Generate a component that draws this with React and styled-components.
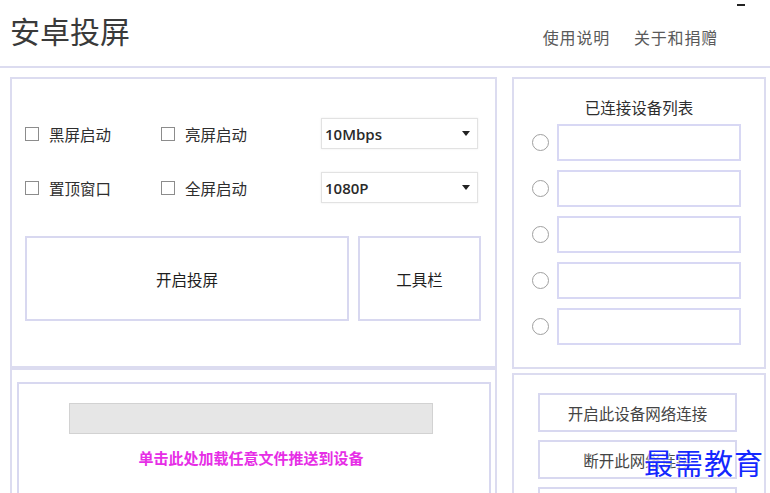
import React from 'react'
import styled, { createGlobalStyle } from 'styled-components'

const GlobalStyle = createGlobalStyle`
  html, body {
    margin: 0;
    padding: 0;
    background: #fff;
    overflow: hidden;
  }
  body {
    font-family: "Noto Sans CJK SC", "Noto Sans", sans-serif;
    color: #333;
  }
`

const Window = styled.div`
  position: relative;
  width: 770px;
  height: 493px;
  overflow: hidden;
  background: #fff;
`

const Header = styled.div`
  display: flex;
  justify-content: space-between;
  align-items: flex-start;
  height: 66px;
  padding: 0 52px 0 10px;
  border-bottom: 2px solid #dcdcf0;
`

const Title = styled.h1`
  margin: 10px 0 0;
  font-size: 30px;
  line-height: 40px;
  font-weight: 400;
  color: #3a3a3a;
`

const Links = styled.div`
  display: flex;
  gap: 24px;
  margin-top: 26px;
`

const Link = styled.span`
  font-size: 16px;
  line-height: 22px;
  color: #5a5a5a;
  letter-spacing: 0.8px;
`

const WinControl = styled.span`
  position: absolute;
  top: 4px;
  right: 25px;
  width: 8px;
  height: 2px;
  background: #222;
`

const Main = styled.div`
  display: flex;
  gap: 15px;
  padding: 9px 0 0 10px;
`

const Column = styled.div`
  display: flex;
  flex-direction: column;
  width: ${p => p.$w}px;
  gap: ${p => p.$gap || 0}px;
`

const Panel = styled.div`
  box-sizing: border-box;
  height: ${p => p.$h ? `${p.$h}px` : 'auto'};
  border: 2px solid #dcdcf0;
  padding: ${p => p.$pad || '0'};
`

const OptionGrid = styled.div`
  display: grid;
  grid-template-columns: 136px 160px 157px;
  grid-auto-rows: 31px;
  row-gap: 23px;
  align-items: center;
`

const Check = styled.label`
  display: flex;
  align-items: center;
  gap: 10px;
  font-size: 15.5px;
  color: #2e2e2e;
`

const Box = styled.span`
  box-sizing: border-box;
  width: 14px;
  height: 14px;
  border: 1.5px solid #8c8c8c;
  background: #fff;
`

const Select = styled.div`
  box-sizing: border-box;
  height: 31px;
  display: flex;
  align-items: center;
  justify-content: space-between;
  padding: 0 7px 0 3px;
  border: 1.5px solid #e2e2e2;
  box-shadow: 0 0 2px rgba(0, 0, 0, 0.08);
  font-family: "Open Sans", "Lato", sans-serif;
  font-weight: 600;
  font-size: 15px;
  color: #2a2a2a;
`

const Caret = styled.span`
  width: 0;
  height: 0;
  border-left: 4.5px solid transparent;
  border-right: 4.5px solid transparent;
  border-top: 5px solid #222;
`

const ButtonRow = styled.div`
  display: flex;
  gap: 9px;
  margin-top: 33px;
`

const BigButton = styled.div`
  box-sizing: border-box;
  width: ${p => p.$w}px;
  height: 85px;
  display: flex;
  align-items: center;
  justify-content: center;
  border: 2px solid #d8d8f0;
  font-size: 15.5px;
  color: #1e1e1e;
`

const InnerPanel = styled.div`
  box-sizing: border-box;
  height: 130px;
  margin: 12px 4px 0 5px;
  border: 2px solid #d8d8f0;
  display: flex;
  flex-direction: column;
  align-items: center;
  padding: 19px 6px 0 0;
`

const Progress = styled.div`
  box-sizing: border-box;
  width: 364px;
  height: 31px;
  background: #e6e6e6;
  border: 1.5px solid #d2d2d2;
`

const PushText = styled.div`
  margin-top: 13px;
  font-size: 15px;
  font-weight: 700;
  color: #e62ee6;
`

const ListTitle = styled.div`
  text-align: center;
  font-size: 15.5px;
  line-height: 22px;
  color: #2e2e2e;
  margin: 0 18px 6px 0;
`

const DeviceList = styled.div`
  display: flex;
  flex-direction: column;
  gap: 9px;
`

const DeviceRow = styled.div`
  display: flex;
  align-items: center;
  gap: 8px;
`

const Radio = styled.span`
  box-sizing: border-box;
  width: 17px;
  height: 17px;
  border-radius: 50%;
  border: 1.5px solid #a0a0a0;
`

const DeviceField = styled.div`
  box-sizing: border-box;
  width: 184px;
  height: 37px;
  border: 2px solid #d8d8f4;
`

const NetButton = styled.div`
  box-sizing: border-box;
  width: 199px;
  height: 39px;
  display: flex;
  align-items: center;
  justify-content: center;
  border: 2px solid #d8d8f0;
  font-size: 15.5px;
  color: #444;
`

const NetButtons = styled.div`
  display: flex;
  flex-direction: column;
  gap: 8px;
`

const Watermark = styled.div`
  position: absolute;
  left: 644px;
  top: 444px;
  font-size: 29px;
  line-height: 36px;
  color: #1428ff;
  letter-spacing: 1px;
  text-shadow: 0 0 3px #fff, 0 0 3px #fff;
`

const options = [
  ['黑屏启动', '亮屏启动', '10Mbps'],
  ['置顶窗口', '全屏启动', '1080P'],
]

export default function App() {
  return (
    <Window>
      <GlobalStyle />
      <WinControl />
      <Header>
        <Title>安卓投屏</Title>
        <Links>
          <Link>使用说明</Link>
          <Link>关于和捐赠</Link>
        </Links>
      </Header>
      <Main>
        <Column $w={487}>
          <Panel $h={291} $pad="39px 0 0 13px">
            <OptionGrid>
              {options.map(row => (
                <React.Fragment key={row[0]}>
                  <Check><Box />{row[0]}</Check>
                  <Check><Box />{row[1]}</Check>
                  <Select>{row[2]}<Caret /></Select>
                </React.Fragment>
              ))}
            </OptionGrid>
            <ButtonRow>
              <BigButton $w={324}>开启投屏</BigButton>
              <BigButton $w={123}>工具栏</BigButton>
            </ButtonRow>
          </Panel>
          <Panel $h={140}>
            <InnerPanel>
              <Progress />
              <PushText>单击此处加载任意文件推送到设备</PushText>
            </InnerPanel>
          </Panel>
        </Column>
        <Column $w={254} $gap={4}>
          <Panel $h={292} $pad="17px 0 0 18px">
            <ListTitle>已连接设备列表</ListTitle>
            <DeviceList>
              {[0, 1, 2, 3, 4].map(i => (
                <DeviceRow key={i}>
                  <Radio />
                  <DeviceField />
                </DeviceRow>
              ))}
            </DeviceList>
          </Panel>
          <Panel $h={140} $pad="18px 0 0 24px">
            <NetButtons>
              <NetButton>开启此设备网络连接</NetButton>
              <NetButton>断开此网络连接</NetButton>
              <NetButton />
            </NetButtons>
          </Panel>
        </Column>
      </Main>
      <Watermark>最需教育</Watermark>
    </Window>
  )
}
